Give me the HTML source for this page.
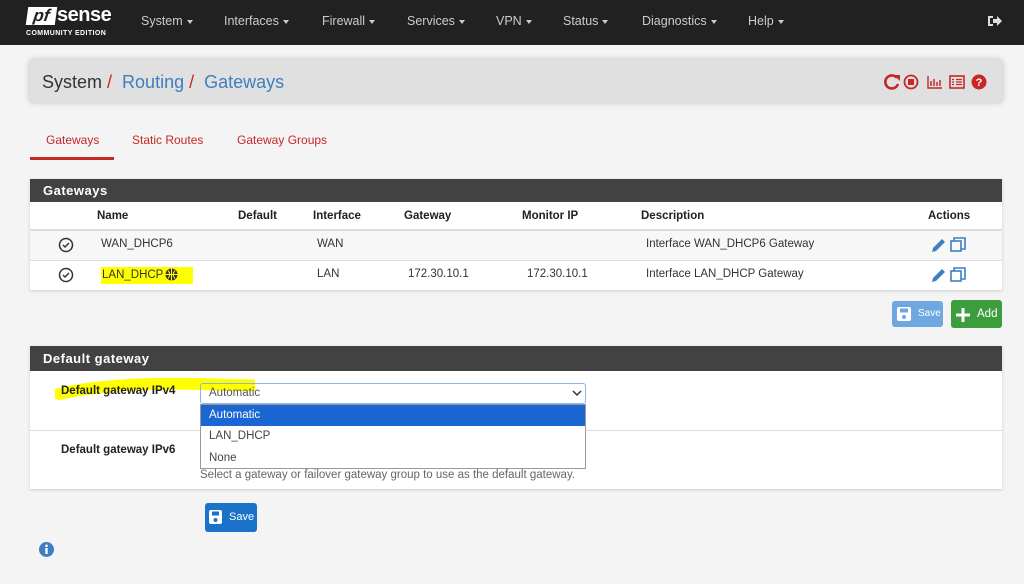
<!DOCTYPE html>
<html><head><meta charset="utf-8"><style>
*{box-sizing:border-box;margin:0;padding:0}
body{width:1024px;height:584px;background:#f4f4f4;font-family:"Liberation Sans",sans-serif;position:relative;overflow:hidden;color:#212121}
.abs{position:absolute}
.nav{left:0;top:0;width:1024px;height:45px;background:#212121}
.nav .m{position:absolute;top:14px;color:#ccc;font-size:12.5px}
.car{display:inline-block;border-left:3.5px solid transparent;border-right:3.5px solid transparent;border-top:4px solid #ccc;vertical-align:middle;margin-left:4px}
.bc{left:30px;top:60px;width:972px;height:42px;background:#e0e0e0;border-radius:4px;box-shadow:0 0 4px 2px #d4d4d4}
.panel{left:30px;width:972px;background:#fff;box-shadow:0 1px 3px #ccc}
.ph{background:#424242;color:#fff;font-weight:bold;font-size:13px;padding:0 13px;letter-spacing:.5px}
.t{position:absolute;font-size:11.5px}
.b{font-weight:bold}
.line{position:absolute;left:0;width:972px;height:1px;background:#ddd}
</style></head><body>
<div class="abs nav">
 <div class="abs" style="left:27px;top:7px;width:29px;height:18px;background:#fff;color:#212121;font:italic bold 17px 'Liberation Sans';line-height:18px;text-align:center;transform:skew(-8deg)">pf</div>
 <div class="abs" style="left:57px;top:4px;color:#fff;font:bold 20px 'Liberation Sans';letter-spacing:-0.5px">sense</div>
 <div class="abs" style="left:26px;top:30px;color:#fff;font:bold 7px 'Liberation Sans';letter-spacing:.4px">COMMUNITY EDITION</div>
 <div class="m" style="left:141px">System<span class="car"></span></div>
 <div class="m" style="left:224px">Interfaces<span class="car"></span></div>
 <div class="m" style="left:322px">Firewall<span class="car"></span></div>
 <div class="m" style="left:407px">Services<span class="car"></span></div>
 <div class="m" style="left:496px">VPN<span class="car"></span></div>
 <div class="m" style="left:563px">Status<span class="car"></span></div>
 <div class="m" style="left:642px">Diagnostics<span class="car"></span></div>
 <div class="m" style="left:748px">Help<span class="car"></span></div>
 <svg class="abs" style="left:987px;top:14px" width="15" height="14" viewBox="0 0 15 14"><path d="M1 2h5v2H3v6h3v2H1z" fill="#ddd"/><path d="M6 5h4V2l5 5-5 5V9H6z" fill="#ddd"/></svg>
</div>
<div class="abs bc">
 <div class="abs" style="left:12px;top:12px;font-size:18px;color:#333">System <span style="color:#c62828">/</span> <span style="color:#3d7fc1">&nbsp;Routing</span> <span style="color:#c62828">/</span> <span style="color:#3d7fc1">&nbsp;Gateways</span></div>
 <svg class="abs" style="left:853px;top:13px" width="110" height="18" viewBox="0 0 110 18">
  <path d="M14 5A6.5 6.5 0 1 0 15 11" fill="none" stroke="#c62828" stroke-width="2.6"/><path d="M11 2h6v6z" fill="#c62828"/>
  <circle cx="28" cy="9" r="6.5" fill="none" stroke="#c62828" stroke-width="1.8"/><rect x="25" y="6" width="6" height="6" fill="#c62828"/>
  <path d="M45 3v12h14" fill="none" stroke="#c62828" stroke-width="1.4"/><path d="M48 8v5M51 6v7M54 9v4M57 7v6" stroke="#c62828" stroke-width="1.5"/>
  <rect x="67" y="3" width="14" height="12" fill="none" stroke="#c62828" stroke-width="1.6"/><path d="M69 6.5h2M73 6.5h6M69 9h2M73 9h6M69 11.5h2M73 11.5h6" stroke="#c62828" stroke-width="1.2"/>
  <circle cx="96" cy="9" r="7.5" fill="#c62828"/><text x="96" y="13" font-size="11" font-weight="bold" fill="#fff" text-anchor="middle" font-family="Liberation Sans">?</text>
 </svg>
</div>
<div class="t" style="left:46px;top:133px;font-size:12px;color:#c62828">Gateways</div>
<div class="abs" style="left:30px;top:157px;width:84px;height:3px;background:#c62828"></div>
<div class="t" style="left:132px;top:133px;font-size:12px;color:#c62828">Static Routes</div>
<div class="t" style="left:237px;top:133px;font-size:12px;color:#c62828">Gateway Groups</div>

<div class="abs panel" style="top:179px;height:111px">
 <div class="ph" style="height:23px;line-height:23px">Gateways</div>
 <div class="t b" style="left:67px;top:31px">Name</div>
 <div class="t b" style="left:208px;top:31px">Default</div>
 <div class="t b" style="left:283px;top:31px">Interface</div>
 <div class="t b" style="left:374px;top:31px">Gateway</div>
 <div class="t b" style="left:492px;top:31px">Monitor IP</div>
 <div class="t b" style="left:611px;top:31px">Description</div>
 <div class="t b" style="left:898px;top:31px">Actions</div>
 <div class="line" style="top:50px;height:2px"></div>
 <div class="abs" style="left:0;top:52px;width:972px;height:29px;background:#f7f7f7"></div>
 <div class="line" style="top:81px"></div>
 <svg class="abs" style="left:28px;top:58px" width="16" height="16"><circle cx="8" cy="8" r="6.5" fill="none" stroke="#333" stroke-width="1.5"/><path d="M5 8l2 2 4-4" fill="none" stroke="#333" stroke-width="1.5"/></svg>
 <svg class="abs" style="left:28px;top:88px" width="16" height="16"><circle cx="8" cy="8" r="6.5" fill="none" stroke="#333" stroke-width="1.5"/><path d="M5 8l2 2 4-4" fill="none" stroke="#333" stroke-width="1.5"/></svg>
 <div class="t" style="left:71px;top:59px;color:#333">WAN_DHCP6</div>
 <div class="t" style="left:287px;top:59px;color:#333">WAN</div>
 <div class="t" style="left:616px;top:59px;color:#333">Interface WAN_DHCP6 Gateway</div>
 <div class="abs" style="left:71px;top:88px;width:92px;height:17px;background:#ffff00"></div>
 <div class="t" style="left:72px;top:90px;color:#333">LAN_DHCP</div>
 <svg class="abs" style="left:134px;top:88px" width="15" height="15"><circle cx="7.5" cy="7.5" r="6" fill="#333"/><path d="M1.5 7.5h12M7.5 1.5v12M4 3.5q3.5 4 0 8M11 3.5q-3.5 4 0 8" stroke="#ff0" stroke-width="1" fill="none"/></svg>
 <div class="t" style="left:287px;top:89px;color:#333">LAN</div>
 <div class="t" style="left:378px;top:89px;color:#333">172.30.10.1</div>
 <div class="t" style="left:497px;top:89px;color:#333">172.30.10.1</div>
 <div class="t" style="left:616px;top:89px;color:#333">Interface LAN_DHCP Gateway</div>
 <svg class="abs" style="left:900px;top:57px" width="38" height="18"><path d="M2 16l1-4 9-9 3 3-9 9z" fill="#3d7fc1"/><rect x="21" y="5" width="10" height="10" fill="none" stroke="#3d7fc1" stroke-width="1.6"/><path d="M24 5V2h11v11h-4" fill="none" stroke="#3d7fc1" stroke-width="1.6"/></svg>
 <svg class="abs" style="left:900px;top:87px" width="38" height="18"><path d="M2 16l1-4 9-9 3 3-9 9z" fill="#3d7fc1"/><rect x="21" y="5" width="10" height="10" fill="none" stroke="#3d7fc1" stroke-width="1.6"/><path d="M24 5V2h11v11h-4" fill="none" stroke="#3d7fc1" stroke-width="1.6"/></svg>
</div>
<div class="abs" style="left:892px;top:301px;width:51px;height:26px;background:#6fa8e0;border-radius:3px;color:#fff;font-size:10px;line-height:26px;padding-left:26px">Save</div>
<svg class="abs" style="left:897px;top:307px" width="14" height="14"><rect x="0" y="0" width="14" height="14" rx="2" fill="#fff"/><rect x="3" y="1.5" width="8" height="4" fill="#6fa8e0"/><circle cx="7" cy="10" r="2" fill="#6fa8e0"/></svg>
<div class="abs" style="left:951px;top:300px;width:51px;height:28px;background:#3c9d3c;border-radius:3px;color:#fff;font-size:11.5px;line-height:28px;padding-left:26px">Add</div>
<svg class="abs" style="left:955px;top:307px" width="16" height="16"><path d="M8 1v14M1 8h14" stroke="#fff" stroke-width="3"/></svg>

<div class="abs panel" style="top:346px;height:143px">
 <div class="ph" style="height:25px;line-height:25px">Default gateway</div>
 <div class="line" style="top:84px"></div>
</div>
<svg class="abs" style="left:55px;top:378px" width="200" height="24"><path d="M4 16q60-14 170-9q40 0 62 3" fill="none" stroke="#ffff00" stroke-width="12" stroke-linecap="round"/></svg>
<div class="t b" style="left:61px;top:385px;color:#222">Default gateway IPv4</div>
<div class="t b" style="left:61px;top:444px;color:#222">Default gateway IPv6</div>
<div class="abs" style="left:200px;top:383px;width:386px;height:21px;border:1px solid #8ab4e8;border-radius:3px;background:transparent"></div>
<div class="t" style="left:209px;top:387px;color:#555">Automatic</div>
<svg class="abs" style="left:572px;top:389px" width="10" height="8"><path d="M1 2l4 4 4-4" fill="none" stroke="#333" stroke-width="1.5"/></svg>
<div class="abs" style="left:200px;top:404px;width:386px;height:65px;background:#fff;border:1px solid #999"></div>
<div class="abs" style="left:201px;top:405px;width:384px;height:21px;background:#1a66d2"></div>
<div class="t" style="left:209px;top:409px;color:#fff">Automatic</div>
<div class="t" style="left:209px;top:430px;color:#444">LAN_DHCP</div>
<div class="t" style="left:209px;top:452px;color:#444">None</div>
<div class="t" style="left:200px;top:469px;color:#666;font-size:11.5px">Select a gateway or failover gateway group to use as the default gateway.</div>
<div class="abs" style="left:205px;top:503px;width:52px;height:29px;background:#1a73c9;border-radius:3px;color:#fff;font-size:11px;line-height:29px;padding-left:24px">Save</div>
<svg class="abs" style="left:209px;top:510px" width="13" height="14"><rect width="13" height="14" rx="2" fill="#fff"/><rect x="3" y="1.5" width="7" height="4" fill="#1a73c9"/><circle cx="6.5" cy="10" r="2" fill="#1a73c9"/></svg>
<svg class="abs" style="left:38px;top:541px" width="17" height="17"><circle cx="8.5" cy="8.5" r="7.5" fill="#3d7fc1"/><rect x="7.3" y="7" width="2.4" height="6" fill="#fff"/><circle cx="8.5" cy="4.8" r="1.3" fill="#fff"/></svg>
</body></html>
